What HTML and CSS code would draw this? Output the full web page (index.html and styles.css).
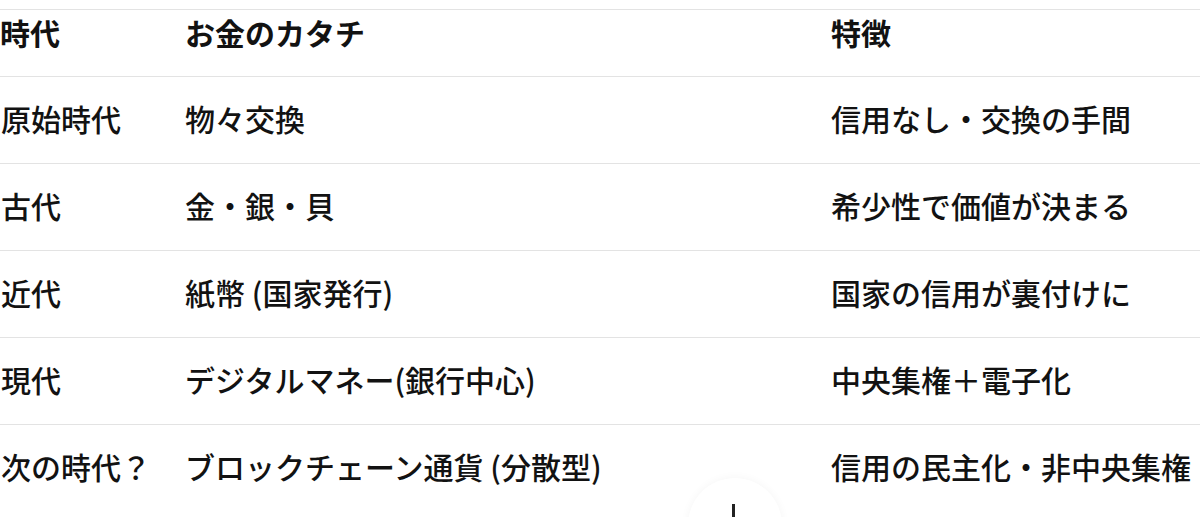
FILE: index.html
```html
<!DOCTYPE html>
<html lang="ja">
<head>
<meta charset="utf-8">
<link rel="stylesheet" href="styles.css">
</head>
<body>
<div class="table">
  <div class="cell head">時代</div>
  <div class="cell head">お金のカタチ</div>
  <div class="cell head">特徴</div>

  <div class="cell">原始時代</div>
  <div class="cell">物々交換</div>
  <div class="cell">信用なし・交換の手間</div>

  <div class="cell">古代</div>
  <div class="cell">金・銀・貝</div>
  <div class="cell">希少性で価値が決まる</div>

  <div class="cell">近代</div>
  <div class="cell">紙幣 (国家発行)</div>
  <div class="cell">国家の信用が裏付けに</div>

  <div class="cell">現代</div>
  <div class="cell">デジタルマネー(銀行中心)</div>
  <div class="cell">中央集権＋電子化</div>

  <div class="cell">次の時代？</div>
  <div class="cell">ブロックチェーン通貨 (分散型)</div>
  <div class="cell">信用の民主化・非中央集権</div>
</div>
<div class="fab"><span class="fab-bar"></span></div>
</body>
</html>
```

FILE: styles.css
```css
html, body {
  margin: 0;
  padding: 0;
  background: #ffffff;
  overflow: hidden;
}
body {
  font-family: "Noto Sans CJK JP", "Noto Sans", sans-serif;
  color: #121212;
  width: 1200px;
  height: 517px;
  position: relative;
}
.table {
  margin-top: 9px;
  display: grid;
  grid-template-columns: 185px 646px 1fr;
}
.cell {
  border-top: 1px solid #e3e3e3;
  font-size: 30px;
  line-height: 30px;
  font-weight: 500;
  padding: 26px 0 30px 0;
  white-space: nowrap;
}
.cell:nth-child(3n+1) {
  padding-left: 1px;
}
.cell.head {
  font-weight: 700;
  padding: 7px 0 29px 0;
}
.fab {
  position: absolute;
  left: 688px;
  top: 478px;
  width: 94px;
  height: 94px;
  border-radius: 50%;
  background: #ffffff;
  box-shadow: 0 0 10px rgba(0, 0, 0, 0.045);
}
.fab-bar {
  position: absolute;
  left: 44px;
  top: 26px;
  width: 3px;
  height: 20px;
  background: #222;
}
```
